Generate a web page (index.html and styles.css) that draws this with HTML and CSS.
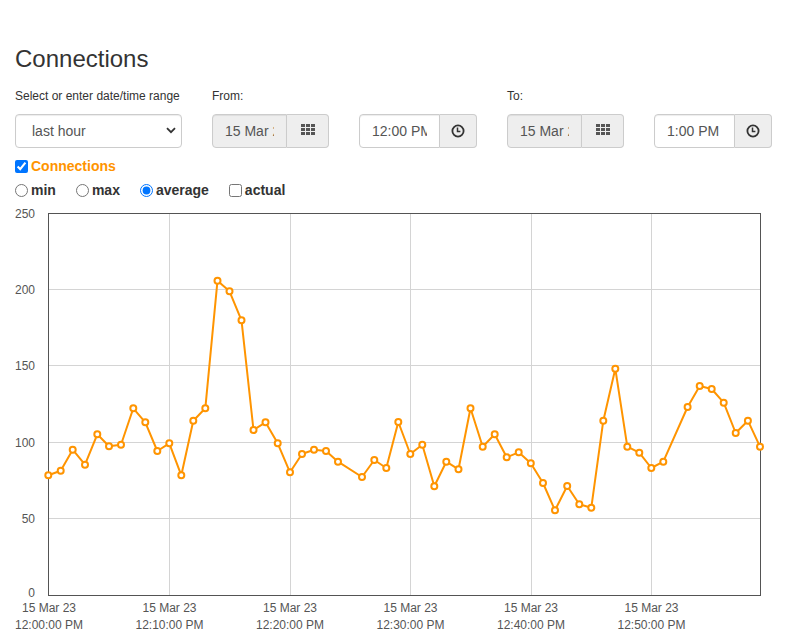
FILE: index.html
```html
<!DOCTYPE html>
<html>
<head>
<meta charset="utf-8">
<title>Connections</title>
<link rel="stylesheet" href="styles.css">
</head>
<body>
<div class="page">
  <h1 class="title">Connections</h1>
  <div class="controls">
    <div class="field">
      <label class="field-label">Select or enter date/time range</label>
      <div class="select-wrap">
        <select class="range-select">
          <option>last hour</option>
        </select>
        <svg class="chevron" width="10" height="7" viewBox="0 0 10 7"><path d="M1 1.2 L5 5.2 L9 1.2" fill="none" stroke="#333" stroke-width="1.8"/></svg>
      </div>
    </div>
    <div class="field">
      <label class="field-label">From:</label>
      <div class="input-group">
        <input class="form-control date" value="15 Mar 23" disabled>
        <span class="addon addon-date">
          <svg width="14" height="11" viewBox="0 0 14 11" fill="#555"><rect x="0" y="0" width="4" height="3"/><rect x="5" y="0" width="4" height="3"/><rect x="10" y="0" width="4" height="3"/><rect x="0" y="4" width="4" height="3"/><rect x="5" y="4" width="4" height="3"/><rect x="10" y="4" width="4" height="3"/><rect x="0" y="8" width="4" height="3"/><rect x="5" y="8" width="4" height="3"/><rect x="10" y="8" width="4" height="3"/></svg>
        </span>
      </div>
    </div>
    <div class="field">
      <label class="field-label">&nbsp;</label>
      <div class="input-group">
        <input class="form-control time" value="12:00 PM">
        <span class="addon addon-time">
          <svg width="14" height="14" viewBox="0 0 14 14"><circle cx="7" cy="7" r="5.6" fill="none" stroke="#333" stroke-width="1.8"/><path d="M6.5 3.4 V7.5 H9.4" fill="none" stroke="#333" stroke-width="1.5"/></svg>
        </span>
      </div>
    </div>
    <div class="field">
      <label class="field-label">To:</label>
      <div class="input-group">
        <input class="form-control date" value="15 Mar 23" disabled>
        <span class="addon addon-date">
          <svg width="14" height="11" viewBox="0 0 14 11" fill="#555"><rect x="0" y="0" width="4" height="3"/><rect x="5" y="0" width="4" height="3"/><rect x="10" y="0" width="4" height="3"/><rect x="0" y="4" width="4" height="3"/><rect x="5" y="4" width="4" height="3"/><rect x="10" y="4" width="4" height="3"/><rect x="0" y="8" width="4" height="3"/><rect x="5" y="8" width="4" height="3"/><rect x="10" y="8" width="4" height="3"/></svg>
        </span>
      </div>
    </div>
    <div class="field">
      <label class="field-label">&nbsp;</label>
      <div class="input-group">
        <input class="form-control time" value="1:00 PM">
        <span class="addon addon-time">
          <svg width="14" height="14" viewBox="0 0 14 14"><circle cx="7" cy="7" r="5.6" fill="none" stroke="#333" stroke-width="1.8"/><path d="M6.5 3.4 V7.5 H9.4" fill="none" stroke="#333" stroke-width="1.5"/></svg>
        </span>
      </div>
    </div>
  </div>

  <div class="series-row">
    <label class="opt series"><input type="checkbox" checked><span>Connections</span></label>
  </div>
  <div class="mode-row">
    <label class="opt"><input type="radio" name="mode"><span>min</span></label>
    <label class="opt"><input type="radio" name="mode"><span>max</span></label>
    <label class="opt"><input type="radio" name="mode" checked><span>average</span></label>
    <label class="opt"><input type="checkbox"><span>actual</span></label>
  </div>

  <svg class="chart" width="772" height="434" viewBox="15 200 772 434">
    <g class="grid" stroke="#d4d4d4" stroke-width="1">
      <line x1="169.5" y1="213" x2="169.5" y2="595"/>
      <line x1="290.5" y1="213" x2="290.5" y2="595"/>
      <line x1="410.5" y1="213" x2="410.5" y2="595"/>
      <line x1="531.5" y1="213" x2="531.5" y2="595"/>
      <line x1="651.5" y1="213" x2="651.5" y2="595"/>
      <line x1="48" y1="289.5" x2="760" y2="289.5"/>
      <line x1="48" y1="365.5" x2="760" y2="365.5"/>
      <line x1="48" y1="442.5" x2="760" y2="442.5"/>
      <line x1="48" y1="518.5" x2="760" y2="518.5"/>
    </g>
    <rect x="48.5" y="213.5" width="712" height="382" fill="none" stroke="#545454" stroke-width="1"/>
    <g class="ylab" font-family="Liberation Sans, Arial, sans-serif" font-size="12" fill="#555" text-anchor="end">
      <text x="35" y="217.5">250</text>
      <text x="35" y="294">200</text>
      <text x="35" y="370">150</text>
      <text x="35" y="446.5">100</text>
      <text x="35" y="523">50</text>
      <text x="35" y="596.5">0</text>
    </g>
    <g class="xlab" font-family="Liberation Sans, Arial, sans-serif" font-size="12" fill="#555" text-anchor="middle">
      <text x="49" y="612">15 Mar 23</text><text x="49" y="629">12:00:00 PM</text>
      <text x="169.5" y="612">15 Mar 23</text><text x="169.5" y="629">12:10:00 PM</text>
      <text x="290" y="612">15 Mar 23</text><text x="290" y="629">12:20:00 PM</text>
      <text x="410.5" y="612">15 Mar 23</text><text x="410.5" y="629">12:30:00 PM</text>
      <text x="531" y="612">15 Mar 23</text><text x="531" y="629">12:40:00 PM</text>
      <text x="651.5" y="612">15 Mar 23</text><text x="651.5" y="629">12:50:00 PM</text>
    </g>
    <polyline fill="none" stroke="#ff9400" stroke-width="2" stroke-linejoin="round"
      points="48.3,475.3 60.7,470.7 72.7,449.7 85,464.7 97.3,434.3 109,446.3 121,444.7 133.3,408.3 145.3,422.3 157.3,451 169.3,443.3 181.3,475.3 193.3,420.7 205.3,408.3 217.5,280.7 229.5,291.3 241.5,320.3 253.5,430 265.5,422.3 277.7,443.3 290,472.3 302,454 314,449.7 326,451 338,461.7 362,477 374.3,460 386.3,468 398.3,422 410.3,454 422.3,444.7 434.3,486.3 446.3,461.7 458.5,469.3 470.5,408.3 482.7,446.7 494.7,434.3 506.7,457.3 518.7,452.3 530.8,463.3 543,483 555,510.3 567.2,486 579.3,504.3 591.3,507.7 603.3,420.7 615.3,368.7 627.3,446.7 639.3,452.7 651.3,468 663.3,461.7 687.6,407 699.7,386 711.7,389 723.7,402.7 735.7,433 747.9,420.7 760,446.7"/>
    <g class="pts" fill="#fff" stroke="#ff9400" stroke-width="2">
      <circle cx="48.3" cy="475.3" r="3"/><circle cx="60.7" cy="470.7" r="3"/><circle cx="72.7" cy="449.7" r="3"/><circle cx="85" cy="464.7" r="3"/><circle cx="97.3" cy="434.3" r="3"/><circle cx="109" cy="446.3" r="3"/><circle cx="121" cy="444.7" r="3"/><circle cx="133.3" cy="408.3" r="3"/><circle cx="145.3" cy="422.3" r="3"/><circle cx="157.3" cy="451" r="3"/><circle cx="169.3" cy="443.3" r="3"/><circle cx="181.3" cy="475.3" r="3"/><circle cx="193.3" cy="420.7" r="3"/><circle cx="205.3" cy="408.3" r="3"/><circle cx="217.5" cy="280.7" r="3"/><circle cx="229.5" cy="291.3" r="3"/><circle cx="241.5" cy="320.3" r="3"/><circle cx="253.5" cy="430" r="3"/><circle cx="265.5" cy="422.3" r="3"/><circle cx="277.7" cy="443.3" r="3"/><circle cx="290" cy="472.3" r="3"/><circle cx="302" cy="454" r="3"/><circle cx="314" cy="449.7" r="3"/><circle cx="326" cy="451" r="3"/><circle cx="338" cy="461.7" r="3"/><circle cx="362" cy="477" r="3"/><circle cx="374.3" cy="460" r="3"/><circle cx="386.3" cy="468" r="3"/><circle cx="398.3" cy="422" r="3"/><circle cx="410.3" cy="454" r="3"/><circle cx="422.3" cy="444.7" r="3"/><circle cx="434.3" cy="486.3" r="3"/><circle cx="446.3" cy="461.7" r="3"/><circle cx="458.5" cy="469.3" r="3"/><circle cx="470.5" cy="408.3" r="3"/><circle cx="482.7" cy="446.7" r="3"/><circle cx="494.7" cy="434.3" r="3"/><circle cx="506.7" cy="457.3" r="3"/><circle cx="518.7" cy="452.3" r="3"/><circle cx="530.8" cy="463.3" r="3"/><circle cx="543" cy="483" r="3"/><circle cx="555" cy="510.3" r="3"/><circle cx="567.2" cy="486" r="3"/><circle cx="579.3" cy="504.3" r="3"/><circle cx="591.3" cy="507.7" r="3"/><circle cx="603.3" cy="420.7" r="3"/><circle cx="615.3" cy="368.7" r="3"/><circle cx="627.3" cy="446.7" r="3"/><circle cx="639.3" cy="452.7" r="3"/><circle cx="651.3" cy="468" r="3"/><circle cx="663.3" cy="461.7" r="3"/><circle cx="687.6" cy="407" r="3"/><circle cx="699.7" cy="386" r="3"/><circle cx="711.7" cy="389" r="3"/><circle cx="723.7" cy="402.7" r="3"/><circle cx="735.7" cy="433" r="3"/><circle cx="747.9" cy="420.7" r="3"/><circle cx="760" cy="446.7" r="3"/>
    </g>
  </svg>
</div>
</body>
</html>
```
FILE: styles.css
```css
html, body {
  margin: 0;
  padding: 0;
  background: #fff;
}
body {
  font-family: "Liberation Sans", Arial, Helvetica, sans-serif;
  font-size: 14px;
  line-height: 20px;
  color: #333;
}
.page {
  padding: 0 15px;
}
.title {
  margin: 46px 0 0;
  font-size: 24px;
  line-height: 26px;
  font-weight: normal;
  color: #333;
}
.controls {
  display: grid;
  grid-template-columns: 167px 117px 118px 117px 118px;
  column-gap: 30px;
  margin-top: 16px;
}
.field {
  display: flex;
  flex-direction: column;
}
.field-label {
  font-size: 12px;
  line-height: 17px;
  margin-bottom: 9px;
  color: #333;
}
.select-wrap {
  position: relative;
  height: 34px;
}
.range-select {
  -webkit-appearance: none;
  appearance: none;
  width: 100%;
  height: 34px;
  box-sizing: border-box;
  padding: 0 12px 0 16px;
  border: 1px solid #ccc;
  border-radius: 4px;
  background: #fff;
  font-family: inherit;
  font-size: 14px;
  color: #555;
  box-shadow: inset 0 1px 1px rgba(0,0,0,0.075);
}
.chevron {
  position: absolute;
  right: 6px;
  top: 13px;
  pointer-events: none;
}
.input-group {
  display: flex;
  height: 34px;
}
.form-control {
  box-sizing: border-box;
  height: 34px;
  padding: 6px 12px;
  border: 1px solid #ccc;
  border-radius: 4px 0 0 4px;
  font-family: inherit;
  font-size: 14px;
  color: #555;
  background: #fff;
  margin: 0;
  min-width: 0;
  box-shadow: inset 0 1px 1px rgba(0,0,0,0.075);
}
.form-control.date {
  width: 75px;
  background: #eee;
  color: #555;
  opacity: 1;
}
.form-control.time {
  width: 81px;
}
.addon {
  box-sizing: border-box;
  height: 34px;
  display: flex;
  align-items: center;
  justify-content: center;
  background: #eee;
  border: 1px solid #ccc;
  border-left: 0;
  border-radius: 0 4px 4px 0;
}
.addon-date {
  width: 42px;
}
.addon-date svg {
  margin-top: -3px;
}
.addon-time {
  width: 37px;
}
.series-row {
  margin-top: 8px;
  display: flex;
  height: 20px;
}
.mode-row {
  margin-top: 4px;
  display: flex;
  height: 20px;
}
.opt {
  display: flex;
  align-items: center;
  font-weight: bold;
  font-size: 14px;
  margin-right: 20px;
}
.opt input {
  margin: 0 3px 0 0;
  width: 13px;
  height: 13px;
}
.series span {
  color: #ff9400;
}
.chart {
  display: block;
}
```
